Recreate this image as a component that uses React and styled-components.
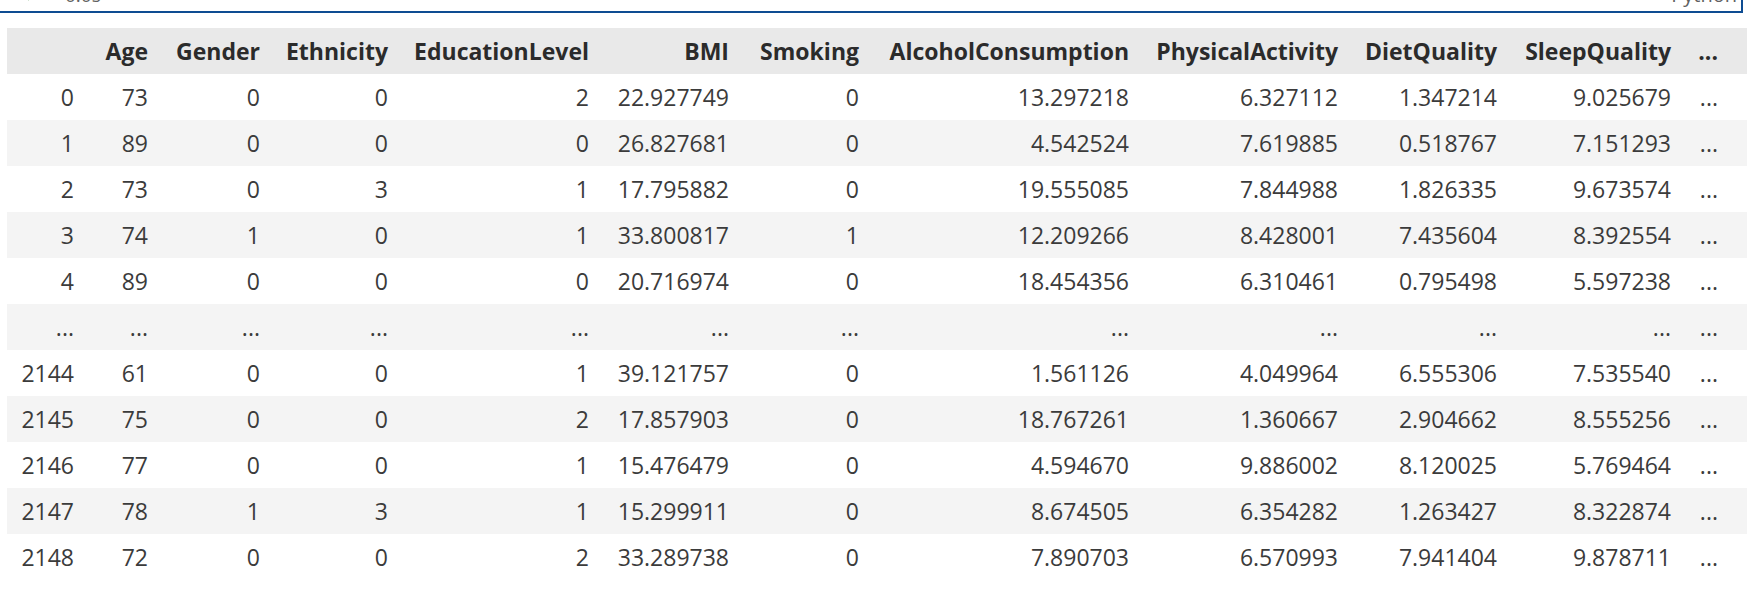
import React from "react";
import styled, { createGlobalStyle } from "styled-components";

const GlobalStyle = createGlobalStyle`
  html, body {
    margin: 0;
    padding: 0;
    background: #ffffff;
    overflow: hidden;
  }
  body {
    font-family: "Open Sans", "Noto Sans", sans-serif;
  }
`;

const Page = styled.div`
  width: 1747px;
  height: 591px;
  overflow: hidden;
  background: #ffffff;
`;

const CellStatus = styled.div`
  display: flex;
  align-items: flex-end;
  height: 11px;
  margin-right: 4px;
  padding-left: 24px;
  padding-right: 4px;
  overflow: hidden;
  border-bottom: 2px solid #0e4c92;
  border-right: 2px solid #0e4c92;
  color: #616161;
  font-family: "Open Sans", sans-serif;
`;

const CheckMark = styled.svg`
  flex: none;
  width: 12px;
  height: 12px;
  margin-bottom: 9px;
`;

const Duration = styled.span`
  font-size: 19px;
  line-height: 1;
  margin-left: 29px;
  margin-bottom: 6px;
`;

const KernelLabel = styled.span`
  font-size: 20px;
  line-height: 1;
  margin-left: auto;
  margin-bottom: 6px;
`;

const TableClip = styled.div`
  margin-top: 15px;
  padding-left: 7px;
  overflow: hidden;
`;

const Table = styled.table`
  table-layout: fixed;
  border-collapse: collapse;
  border-spacing: 0;
  width: 1780px;
  font-family: "Open Sans", "Noto Sans", sans-serif;
  font-size: 23px;
  color: #3b3b3b;
`;

const HeadRow = styled.tr`
  background: #e9e9e9;
  height: 46px;
`;

const HeadCell = styled.th`
  padding: 0 14px 0 0;
  text-align: right;
  font-weight: 700;
  color: #2b2b2b;
  line-height: 46px;
  white-space: nowrap;
  overflow: hidden;
`;

const BodyRow = styled.tr`
  height: 46px;
  background: ${(p) => (p.$striped ? "#f4f4f4" : "#ffffff")};
`;

const Cell = styled.td`
  padding: 0 14px 0 0;
  text-align: right;
  line-height: 46px;
  white-space: nowrap;
  overflow: hidden;
`;

const columns = [
  { key: "index", label: "", width: 81 },
  { key: "Age", label: "Age", width: 74 },
  { key: "Gender", label: "Gender", width: 112 },
  { key: "Ethnicity", label: "Ethnicity", width: 128 },
  { key: "EducationLevel", label: "EducationLevel", width: 201 },
  { key: "BMI", label: "BMI", width: 140 },
  { key: "Smoking", label: "Smoking", width: 130 },
  { key: "AlcoholConsumption", label: "AlcoholConsumption", width: 270 },
  { key: "PhysicalActivity", label: "PhysicalActivity", width: 209 },
  { key: "DietQuality", label: "DietQuality", width: 159 },
  { key: "SleepQuality", label: "SleepQuality", width: 174 },
  { key: "more", label: "...", width: 47 },
];

const rows = [
  ["0", "73", "0", "0", "2", "22.927749", "0", "13.297218", "6.327112", "1.347214", "9.025679", "..."],
  ["1", "89", "0", "0", "0", "26.827681", "0", "4.542524", "7.619885", "0.518767", "7.151293", "..."],
  ["2", "73", "0", "3", "1", "17.795882", "0", "19.555085", "7.844988", "1.826335", "9.673574", "..."],
  ["3", "74", "1", "0", "1", "33.800817", "1", "12.209266", "8.428001", "7.435604", "8.392554", "..."],
  ["4", "89", "0", "0", "0", "20.716974", "0", "18.454356", "6.310461", "0.795498", "5.597238", "..."],
  ["...", "...", "...", "...", "...", "...", "...", "...", "...", "...", "...", "..."],
  ["2144", "61", "0", "0", "1", "39.121757", "0", "1.561126", "4.049964", "6.555306", "7.535540", "..."],
  ["2145", "75", "0", "0", "2", "17.857903", "0", "18.767261", "1.360667", "2.904662", "8.555256", "..."],
  ["2146", "77", "0", "0", "1", "15.476479", "0", "4.594670", "9.886002", "8.120025", "5.769464", "..."],
  ["2147", "78", "1", "3", "1", "15.299911", "0", "8.674505", "6.354282", "1.263427", "8.322874", "..."],
  ["2148", "72", "0", "0", "2", "33.289738", "0", "7.890703", "6.570993", "7.941404", "9.878711", "..."],
];

export default function App() {
  return (
    <Page>
      <GlobalStyle />
      <CellStatus>
        <CheckMark viewBox="0 0 16 16" aria-hidden="true">
          <path d="M2 8.5 L6 12.5 L14 3.5" fill="none" stroke="#388a34" strokeWidth="2" />
        </CheckMark>
        <Duration>0.0s</Duration>
        <KernelLabel>Python</KernelLabel>
      </CellStatus>
      <TableClip>
        <Table>
          <colgroup>
            {columns.map((c) => (
              <col key={c.key} style={{ width: c.width }} />
            ))}
            <col />
          </colgroup>
          <thead>
            <HeadRow>
              {columns.map((c) => (
                <HeadCell key={c.key}>{c.label}</HeadCell>
              ))}
              <HeadCell />
            </HeadRow>
          </thead>
          <tbody>
            {rows.map((r, i) => (
              <BodyRow key={r[0] + i} $striped={i % 2 === 1}>
                {r.map((v, j) => (
                  <Cell key={j}>{v}</Cell>
                ))}
                <Cell />
              </BodyRow>
            ))}
          </tbody>
        </Table>
      </TableClip>
    </Page>
  );
}
